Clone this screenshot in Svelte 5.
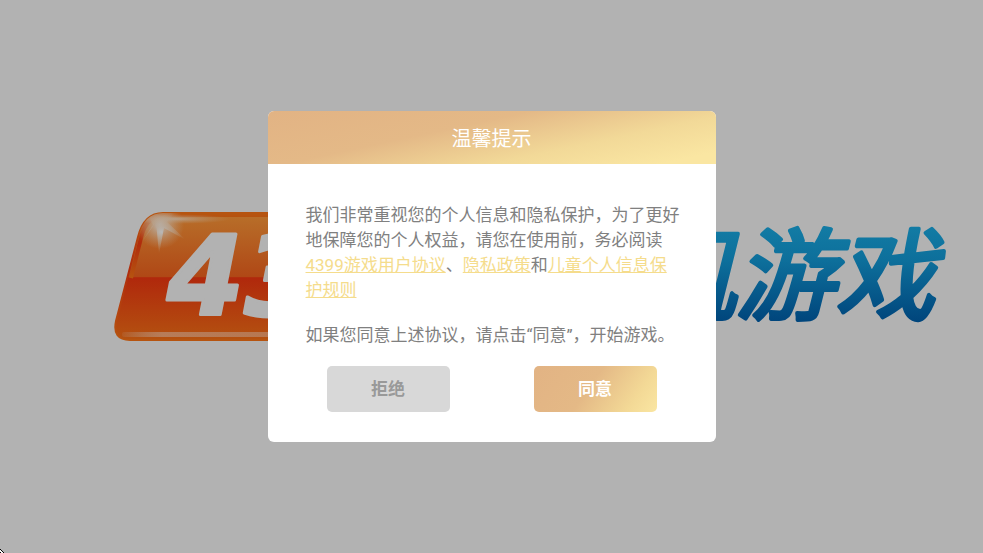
<script>
  let open = true

  const agreements = {
    user: '4399游戏用户协议',
    privacy: '隐私政策',
    children: '儿童个人信息保护规则'
  }

  const answer = () => {
    open = false
  }
</script>

<style>
  :global(body) {
    background: #b2b2b2;
  }

  .splash {
    position: relative;
    display: flex;
    align-items: center;
    justify-content: center;
    min-height: 100vh;
    overflow: hidden;
    font-family: Roboto, "Noto Sans CJK SC", sans-serif;
  }

  .splash__logo {
    position: absolute;
    inset: 0;
    width: 100%;
    height: 100%;
  }

  .splash__number {
    font-family: "DejaVu Sans", sans-serif;
    font-size: 111px;
    font-style: italic;
    font-weight: 700;
  }

  .splash__name {
    font-family: "Noto Sans CJK SC", sans-serif;
    font-size: 100px;
    font-style: italic;
    font-weight: 400;
  }

  .splash__corner {
    position: absolute;
    bottom: 0;
    left: 0;
    width: 4px;
    height: 4px;
  }

  .dialog {
    position: relative;
    width: 448px;
    max-width: 100%;
    border-radius: 6px;
    background: #fff;
    overflow: hidden;
  }

  .dialog__title {
    margin: 0;
    padding-top: 3px;
    background: linear-gradient(168deg, #e2b384 0%, #e4b987 38%, #f2d998 68%, #fae6a2 92%);
    color: #fff;
    font-size: 20px;
    font-weight: 400;
    line-height: 50px;
    text-align: center;
  }

  .dialog__content {
    padding: 39px 36px 18px 38px;
    color: #808080;
    font-size: 17px;
    line-height: 25px;
  }

  .dialog__content p {
    margin: 0;
  }

  .dialog__content p + p {
    margin-top: 20px;
  }

  .dialog__link {
    color: #f5dc8c;
    text-decoration: underline;
  }

  .dialog__actions {
    display: flex;
    justify-content: center;
    gap: 84px;
    padding-bottom: 30px;
  }

  .dialog__button {
    width: 123px;
    height: 46px;
    padding: 0 0 4px;
    border: 0;
    border-radius: 5px;
    background: #d8d8d8;
    color: #999;
    font-family: inherit;
    font-size: 17px;
    font-weight: 700;
  }

  .dialog__button--accept {
    background: linear-gradient(125deg, #e2b384 0%, #e4b986 45%, #f3d996 80%, #fae6a2 100%);
    color: #fff;
  }
</style>

<main class="splash">
  <svg class="splash__logo" viewBox="0 0 983 553" role="img" aria-label="4399手机游戏">
    <defs>
      <linearGradient id="gloss" x1="0" y1="0" x2="0" y2="1">
        <stop offset="0" stop-color="#b8702a" />
        <stop offset="0.5" stop-color="#b04816" />
        <stop offset="0.51" stop-color="#b0280c" />
        <stop offset="1" stop-color="#b45210" />
      </linearGradient>
      <linearGradient id="rim" x1="0" y1="0" x2="0" y2="1">
        <stop offset="0" stop-color="#b65410" />
        <stop offset="0.45" stop-color="#b02c0c" />
        <stop offset="1" stop-color="#b65410" />
      </linearGradient>
      <linearGradient id="water" gradientUnits="userSpaceOnUse" x1="0" y1="228" x2="0" y2="322">
        <stop offset="0" stop-color="#127ba4" />
        <stop offset="0.35" stop-color="#0d6f9b" />
        <stop offset="1" stop-color="#00457c" />
      </linearGradient>
      <linearGradient id="shine" x1="0" y1="0" x2="1" y2="0">
        <stop offset="0" stop-color="#b2b2b2" stop-opacity="0.1" />
        <stop offset="0.12" stop-color="#b89078" stop-opacity="0.7" />
        <stop offset="1" stop-color="#b89078" stop-opacity="0.5" />
      </linearGradient>
      <radialGradient id="flare">
        <stop offset="0" stop-color="#b8b8b8" />
        <stop offset="0.3" stop-color="#b8a898" stop-opacity="0.75" />
        <stop offset="1" stop-color="#b89878" stop-opacity="0" />
      </radialGradient>
      <clipPath id="badge">
        <path d="M163 213H500L470 340H130Q112 340 116 321L138 237Q144 213 163 213Z" />
      </clipPath>
    </defs>

    <path d="M163 213H500L470 340H130Q112 340 116 321L138 237Q144 213 163 213Z" fill="url(#gloss)" stroke="url(#rim)" stroke-width="2" />
    <path d="M131 278L141 238Q146 215 166 215H490" fill="none" stroke="url(#rim)" stroke-width="4" />
    <rect x="122" y="332" width="340" height="5" rx="2" fill="url(#shine)" />
    <g clip-path="url(#badge)">
      <ellipse cx="175" cy="219" rx="55" ry="5" fill="url(#flare)" opacity="0.7" />
      <circle cx="160" cy="225" r="24" fill="url(#flare)" />
      <path d="M156 222L159 254L164 228L186 240L167 222L176 211L161 216L146 210L153 225L137 249Z" fill="url(#flare)" />
    </g>
    <text class="splash__number" x="167" y="315" fill="#b2b2b2" stroke="#b2b2b2" stroke-width="3" stroke-linejoin="round">4399</text>
    <text class="splash__name" x="535" y="312" fill="url(#water)" stroke="url(#water)" stroke-width="4" stroke-linejoin="round">手机游戏</text>
  </svg>

  <svg class="splash__corner" viewBox="0 0 4 4" shape-rendering="crispEdges" aria-hidden="true">
    <path d="M0 0L4 4H0Z" fill="#000" />
    <path d="M0 1h1v1h1v1h1v1H1V3H0Z" fill="#fff" />
  </svg>

  {#if open}
    <section class="dialog" role="dialog" aria-labelledby="dialog-title">
      <h1 class="dialog__title" id="dialog-title">温馨提示</h1>
      <div class="dialog__content">
        <p>我们非常重视您的个人信息和隐私保护，为了更好地保障您的个人权益，请您在使用前，务必阅读<a class="dialog__link" href="#user">{agreements.user}</a>、<a class="dialog__link" href="#privacy">{agreements.privacy}</a>和<a class="dialog__link" href="#children">{agreements.children}</a></p>
        <p>如果您同意上述协议，请点击“同意”，开始游戏。</p>
      </div>
      <div class="dialog__actions">
        <button class="dialog__button" type="button" on:click={answer}>拒绝</button>
        <button class="dialog__button dialog__button--accept" type="button" on:click={answer}>同意</button>
      </div>
    </section>
  {/if}
</main>
